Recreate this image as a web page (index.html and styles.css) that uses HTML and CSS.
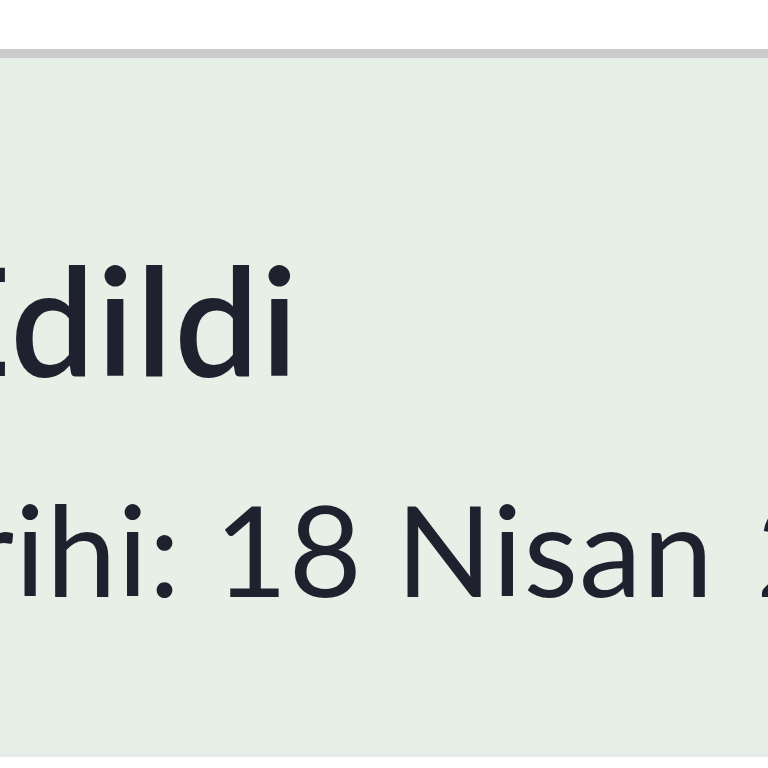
FILE: index.html
```html
<!DOCTYPE html>
<html lang="tr">
<head>
<meta charset="utf-8">
<link rel="stylesheet" href="styles.css">
</head>
<body>
<div class="top"></div>
<section class="card">
  <div class="title-row"><span class="title">Teslim Edildi</span></div>
  <div class="date-row">
    <div class="date-head"><span>Teslim Tarihi: 18 Nisan</span></div>
    <span class="date-tail">2024</span>
  </div>
</section>
<div class="bottom"></div>
</body>
</html>
```
FILE: styles.css
```css
html, body {
  margin: 0;
  padding: 0;
  background: #ffffff;
  overflow: hidden;
}
body {
  width: 768px;
  height: 768px;
  font-family: Lato, "Noto Sans", sans-serif;
  color: #1f212e;
}
.top {
  height: 49px;
  background: #ffffff;
}
.card {
  height: 695px;
  background: #e7f0e7;
  border-top: 9px solid #cbcbcb;
  border-bottom: 4px solid #e9ebea;
  overflow: hidden;
  display: flex;
  flex-direction: column;
}
.title-row {
  width: 300px;
  display: flex;
  justify-content: flex-end;
  white-space: nowrap;
  margin-top: 185px;
  flex-shrink: 0;
}
.title {
  font-size: 150px;
  font-weight: 600;
  letter-spacing: 2px;
  line-height: 1;
}
.date-row {
  display: flex;
  white-space: nowrap;
  margin-top: 93px;
  font-size: 126px;
  font-weight: 400;
  letter-spacing: 1px;
  line-height: 1;
}
.date-head {
  width: 714px;
  flex-shrink: 0;
  display: flex;
  justify-content: flex-end;
}
.date-tail {
  padding-left: 42px;
}
```
